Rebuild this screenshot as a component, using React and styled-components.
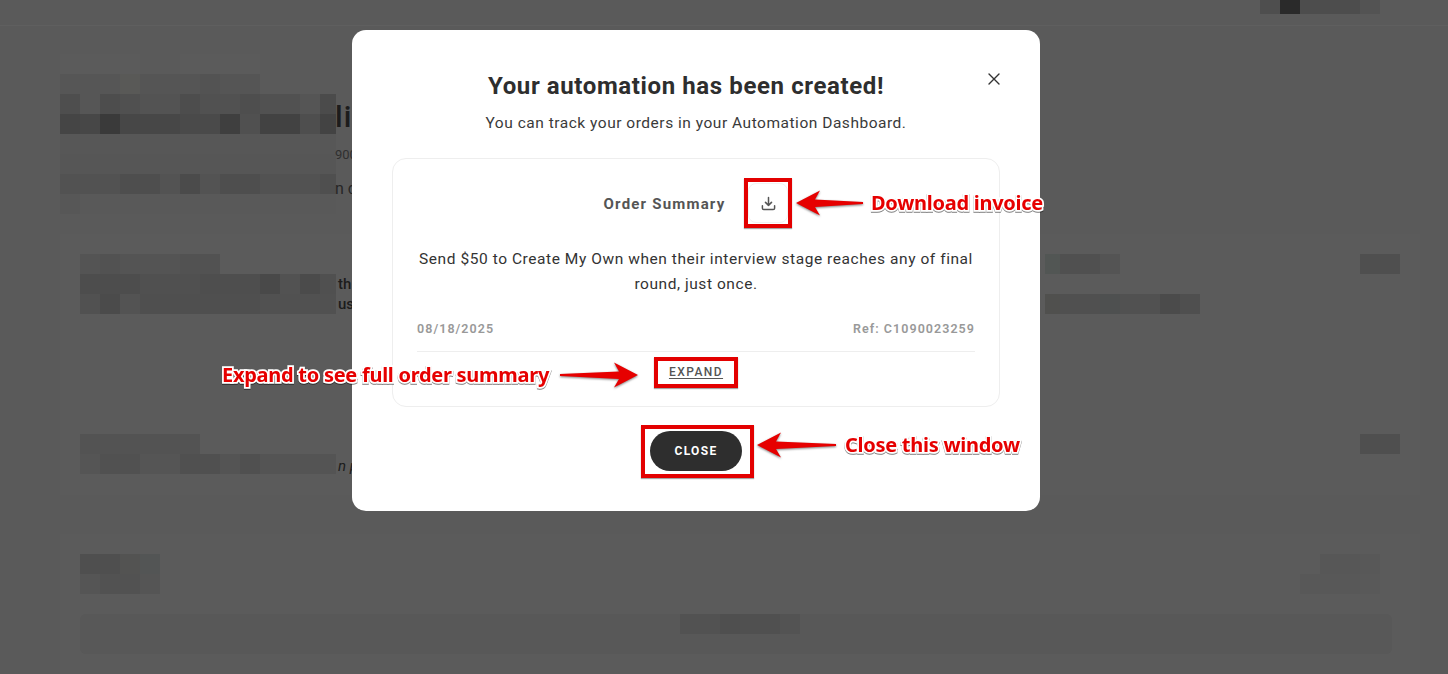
import React from "react";
import styled, { createGlobalStyle } from "styled-components";

const GlobalStyle = createGlobalStyle`
  html, body {
    margin: 0;
    padding: 0;
    background: #5a5a5a;
    overflow: hidden;
  }
`;

const FONT = `Roboto, "Liberation Sans", sans-serif`;

// pixelated blocks behind the dialog: [width, colour] per cell
const heading = [
  [[80, "#5b5b5b"], [40, "#5a5a5a"], [80, "#5b5b5b"]],
  [[60, "#565656"], [20, "#595957"], [60, "#555"], [20, "#535353"], [40, "#555"]],
  [[20, "#4e4e4e"], [20, "#565656"], [20, "#4d4d4d"], [20, "#505050"], [40, "#535353"], [20, "#4d4d4d"], [40, "#515151"], [20, "#4e4e4e"], [40, "#515151"], [20, "#555"], [16, "#4b4b4b"]],
  [[20, "#454545"], [20, "#474747"], [20, "#3a3a3a"], [60, "#474747"], [40, "#4a4a4a"], [20, "#3f3f3f"], [20, "#505050"], [40, "#424242"], [20, "#4e4e4e"], [16, "#434343"]],
  [[276, "#575757"]],
  [[276, "#565656"]],
  [[60, "#525252"], [40, "#4e4e4e"], [20, "#535353"], [20, "#4b4b4b"], [20, "#535353"], [40, "#4e4e4e"], [60, "#525252"], [16, "#4f4f4f"]],
  [[20, "#575757"], [256, "#595959"]],
];

const cardOneLeft = [
  [[20, "#545454"], [20, "#525252"], [60, "#545454"], [40, "#525252"]],
  [[60, "#4d4d4d"], [60, "#505050"], [60, "#4e4e4e"], [20, "#494949"], [20, "#525252"], [20, "#4b4b4b"], [16, "#505050"]],
  [[20, "#515151"], [20, "#4b4b4b"], [20, "#535353"], [120, "#4f4f4f"], [76, "#515151"]],
];

const cardTwoLeft = [
  [[120, "#535353"]],
  [[20, "#555"], [40, "#515151"], [40, "#555"], [40, "#505050"], [20, "#545454"], [20, "#505050"], [76, "#545454"]],
];

const cardThreeLeft = [
  [[40, "#4f4f4f"], [20, "#535352"], [20, "#535555"]],
  [[20, "#555"], [40, "#525252"], [20, "#555"]],
];

const cardThreeRight = [
  [[20, "#5b5b5b"], [40, "#575757"], [20, "#585858"]],
  [[60, "#585858"], [20, "#595959"]],
];

const Mosaic = ({ rows, height = 20 }) => (
  <MosaicGrid>
    {rows.map((row, i) => (
      <MosaicRow key={i} $height={height}>
        {row.map(([w, c], j) => (
          <Cell key={j} $w={w} $c={c} />
        ))}
      </MosaicRow>
    ))}
  </MosaicGrid>
);

const MosaicGrid = styled.div`
  display: flex;
  flex-direction: column;
  flex: none;
`;

const MosaicRow = styled.div`
  display: flex;
  height: ${(p) => p.$height}px;
`;

const Cell = styled.span`
  flex: none;
  width: ${(p) => p.$w}px;
  background: ${(p) => p.$c};
`;

const Page = styled.div`
  position: relative;
  width: 1448px;
  height: 674px;
  overflow: hidden;
  background: #5a5a5a;
  font-family: ${FONT};
  color: #1c1c1c;
`;

const TopBar = styled.div`
  display: flex;
  justify-content: flex-end;
  height: 25px;
  padding-right: 68px;
  border-bottom: 1px solid #5f5f5f;
  margin-bottom: 28px;
`;

const Content = styled.div`
  display: flex;
  flex-direction: column;
  padding: 0 28px 0 60px;
`;

const HeadingRow = styled.div`
  display: flex;
  height: 180px;
`;

const HeadingFragments = styled.div`
  display: flex;
  flex-direction: column;
  padding-top: 46px;
  margin-left: -1px;
  white-space: nowrap;
`;

const HeadingTitle = styled.div`
  font-size: 30px;
  line-height: 34px;
  font-weight: 500;
  letter-spacing: 1px;
`;

const HeadingMeta = styled.div`
  font-size: 13px;
  line-height: 16px;
  margin-top: 13px;
  color: #2f2f2f;
`;

const HeadingLine = styled.div`
  font-size: 16px;
  line-height: 20px;
  margin-top: 16px;
  color: #262626;
`;

const Card = styled.section`
  box-sizing: border-box;
  background: #5b5b5b;
  display: flex;
  flex-direction: column;
  height: ${(p) => p.$height}px;
  padding: 20px 20px 0;
  margin-top: ${(p) => p.$gap || 0}px;
`;

const CardRow = styled.div`
  display: flex;
  align-items: flex-start;
  justify-content: space-between;
  padding-right: ${(p) => p.$inset || 0}px;
`;

const CardLeft = styled.div`
  display: flex;
`;

const CardRight = styled.div`
  display: flex;
  align-items: flex-start;
`;

const Fragments = styled.div`
  display: flex;
  flex-direction: column;
  padding-top: ${(p) => p.$top}px;
  margin-left: 2px;
  font-size: 15px;
  line-height: 20px;
  font-weight: ${(p) => (p.$italic ? 400 : 500)};
  font-style: ${(p) => (p.$italic ? "italic" : "normal")};
  white-space: nowrap;
`;

const WideBlock = styled.div`
  display: flex;
  justify-content: center;
  height: 40px;
  margin-top: 20px;
  margin-right: 8px;
  padding-left: 8px;
  border-radius: 6px;
  background: #585858;
`;

const Overlay = styled.div`
  position: absolute;
  inset: 0;
  display: flex;
  align-items: flex-start;
  justify-content: center;
  padding: 30px 56px 0 0;
`;

const Dialog = styled.div`
  box-sizing: border-box;
  width: 688px;
  padding: 41px 40px 40px;
  background: #fff;
  border-radius: 14px;
  color: #333;
`;

const DialogHeader = styled.div`
  display: flex;
  align-items: center;
`;

const Title = styled.h2`
  flex: 1;
  margin: 0;
  font-size: 24px;
  line-height: 30px;
  font-weight: 700;
  letter-spacing: 0.61px;
  text-align: center;
  color: #2e2e2e;
`;

const CloseIcon = styled.button`
  display: flex;
  justify-content: flex-end;
  width: 20px;
  padding: 0;
  border: 0;
  background: none;
  color: #333;
  margin-top: -14px;
`;

const Subtitle = styled.p`
  margin: 10px 0 23px;
  font-size: 15.5px;
  line-height: 24px;
  letter-spacing: 0.52px;
  text-align: center;
  color: #3a3a3a;
`;

const SummaryCard = styled.div`
  box-sizing: border-box;
  height: 249px;
  padding: 24px 24px 0;
  border: 1px solid #eee;
  border-radius: 14px;
`;

const SummaryHeader = styled.div`
  display: flex;
  align-items: center;
  justify-content: center;
  gap: 23px;
`;

const SummaryTitle = styled.span`
  font-size: 15px;
  font-weight: 700;
  letter-spacing: 1.2px;
  color: #555;
  padding-top: 1px;
`;

const IconButton = styled.button`
  display: flex;
  align-items: center;
  justify-content: center;
  box-sizing: border-box;
  width: 40px;
  height: 40px;
  padding: 0;
  border: 1px solid #f2f2f2;
  border-radius: 8px;
  background: #fff;
  color: #555;
`;

const SummaryText = styled.p`
  margin: 24px 0 0;
  font-size: 15.5px;
  line-height: 25px;
  letter-spacing: 0.56px;
  text-align: center;
  color: #333;
`;

const MetaRow = styled.div`
  display: flex;
  justify-content: space-between;
  margin-top: 22px;
  padding-bottom: 12px;
  border-bottom: 1px solid #eee;
  font-size: 12.5px;
  line-height: 20px;
  font-weight: 600;
  letter-spacing: 1.05px;
  color: #999;
`;

const ExpandRow = styled.div`
  display: flex;
  justify-content: center;
  margin-top: 13px;
`;

const ExpandLink = styled.a`
  font-size: 12px;
  line-height: 15px;
  font-weight: 500;
  letter-spacing: 1.45px;
  text-decoration: underline;
  text-underline-offset: 2px;
  color: #555;
`;

const DialogFooter = styled.div`
  display: flex;
  justify-content: center;
  margin-top: 24px;
`;

const CloseButton = styled.button`
  width: 92px;
  height: 40px;
  padding: 0;
  border: 0;
  border-radius: 20px;
  background: #2e2e2e;
  color: #fff;
  font-family: ${FONT};
  font-size: 12px;
  font-weight: 700;
  letter-spacing: 1.3px;
`;

// screenshot annotations, drawn on top of the dialog
const Marker = styled.div`
  position: absolute;
  box-sizing: border-box;
  left: ${(p) => p.$x}px;
  top: ${(p) => p.$y}px;
  width: ${(p) => p.$w}px;
  height: ${(p) => p.$h}px;
  border: 4px solid #e30000;
  box-shadow: 0 1px 1px rgba(0, 0, 0, 0.35);
`;

const Label = styled.span`
  position: absolute;
  left: ${(p) => p.$x}px;
  top: ${(p) => p.$y}px;
  font-family: "Noto Sans", sans-serif;
  font-size: 20px;
  line-height: 26px;
  font-weight: 700;
  letter-spacing: -0.27px;
  white-space: nowrap;
  color: #e60000;
  -webkit-text-stroke: 3.5px #fff;
  paint-order: stroke fill;
  filter: drop-shadow(0 1px 0.5px rgba(0, 0, 0, 0.5));
`;

const ArrowSvg = styled.svg`
  position: absolute;
  left: ${(p) => p.$x}px;
  top: ${(p) => p.$y}px;
  transform: ${(p) => (p.$flip ? "scaleX(-1)" : "none")};
  filter: drop-shadow(0 1.5px 1px rgba(0, 0, 0, 0.5));
`;

const Arrow = ({ x, y, w, flip }) => (
  <ArrowSvg $x={x} $y={y} $flip={flip} width={w} height="26" viewBox={`0 0 ${w} 26`}>
    <path d={`M0 13 L24 0.5 L19 9.5 L${w} 12 L${w} 14 L19 17 L24 25.5 Z`} fill="#e60000" />
  </ArrowSvg>
);

export default function App() {
  return (
    <Page>
      <GlobalStyle />
      <TopBar>
        <Mosaic
          height={14}
          rows={[[[20, "#4e4e4e"], [20, "#2a2a2a"], [60, "#4d4d4d"], [20, "#535353"]]]}
        />
      </TopBar>
      <Content>
        <HeadingRow>
          <Mosaic rows={heading} />
          <HeadingFragments>
            <HeadingTitle>li</HeadingTitle>
            <HeadingMeta>900</HeadingMeta>
            <HeadingLine>n d</HeadingLine>
          </HeadingFragments>
        </HeadingRow>

        <Card $height={180}>
          <CardRow>
            <CardLeft>
              <Mosaic rows={cardOneLeft} />
              <Fragments $top={20}>
                <span>th</span>
                <span>us</span>
              </Fragments>
            </CardLeft>
            <CardRight>
              <Mosaic
                rows={[
                  [[15, "#525654"], [40, "#505050"], [20, "#545454"], [240, "#5b5b5b"], [40, "#4f4f4f"]],
                  [[355, "#5b5b5b"]],
                  [[15, "#50504e"], [40, "#505050"], [20, "#4e5050"], [40, "#515151"], [20, "#4b4b4b"], [20, "#4f4f4f"], [200, "#5b5b5b"]],
                ]}
              />
            </CardRight>
          </CardRow>
        </Card>

        <Card $height={81}>
          <CardRow>
            <CardLeft>
              <Mosaic rows={cardTwoLeft} />
              <Fragments $top={22} $italic>
                <span>n p</span>
              </Fragments>
            </CardLeft>
            <CardRight>
              <Mosaic rows={[[[40, "#4f4f4f"]]]} />
            </CardRight>
          </CardRow>
        </Card>

        <Card $height={140} $gap={39}>
          <CardRow $inset={20}>
            <Mosaic rows={cardThreeLeft} />
            <Mosaic rows={cardThreeRight} />
          </CardRow>
          <WideBlock>
            <Mosaic rows={[[[40, "#525252"], [20, "#4f4f4f"], [40, "#505050"], [20, "#535353"]]]} />
          </WideBlock>
        </Card>
      </Content>

      <Overlay>
        <Dialog>
          <DialogHeader>
            <Title>Your automation has been created!</Title>
            <CloseIcon aria-label="Close">
              <svg width="12" height="12" viewBox="0 0 12 12" fill="none" stroke="currentColor" strokeWidth="1.4" strokeLinecap="round">
                <path d="M1 1 L11 11 M11 1 L1 11" />
              </svg>
            </CloseIcon>
          </DialogHeader>
          <Subtitle>You can track your orders in your Automation Dashboard.</Subtitle>
          <SummaryCard>
            <SummaryHeader>
              <SummaryTitle>Order Summary</SummaryTitle>
              <IconButton aria-label="Download invoice">
                <svg width="15" height="15" viewBox="0 0 16 16" fill="none" stroke="currentColor" strokeWidth="1.6" strokeLinecap="round" strokeLinejoin="round">
                  <path d="M8 1.5 V10 M4.8 6.8 L8 10 L11.2 6.8 M1.5 10.5 V13 Q1.5 14.5 3 14.5 H13 Q14.5 14.5 14.5 13 V10.5" />
                </svg>
              </IconButton>
            </SummaryHeader>
            <SummaryText>
              Send $50 to Create My Own when their interview stage reaches any of final round, just once.
            </SummaryText>
            <MetaRow>
              <span>08/18/2025</span>
              <span>Ref: C1090023259</span>
            </MetaRow>
            <ExpandRow>
              <ExpandLink>EXPAND</ExpandLink>
            </ExpandRow>
          </SummaryCard>
          <DialogFooter>
            <CloseButton>CLOSE</CloseButton>
          </DialogFooter>
        </Dialog>
      </Overlay>

      <Marker $x={744} $y={178} $w={48} $h={50} />
      <Marker $x={654} $y={357} $w={84} $h={31} />
      <Marker $x={641} $y={425} $w={113} $h={53} />

      <Arrow x={796} y={190} w={67} />
      <Arrow x={560} y={362} w={78} flip />
      <Arrow x={757} y={432} w={79} />

      <Label $x={871} $y={190}>Download invoice</Label>
      <Label $x={222} $y={362}>Expand to see full order summary</Label>
      <Label $x={845} $y={432}>Close this window</Label>
    </Page>
  );
}
